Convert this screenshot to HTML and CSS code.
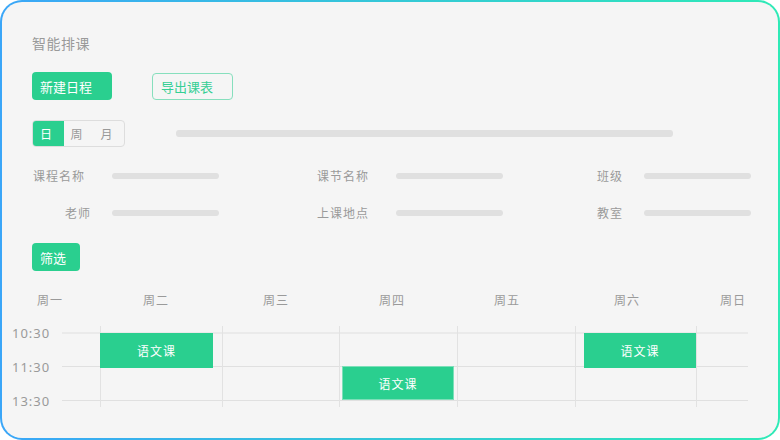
FILE: index.html
```html
<!DOCTYPE html>
<html lang="zh">
  <head>
    <meta charset="UTF-8" />
    <meta name="viewport" content="width=device-width, initial-scale=1.0" />
    <title>智能排课</title>
    <link rel="stylesheet" href="styles.css">
  </head>
  <body>
    <div class="card">
      <div class="title">智能排课</div>

      <div class="toolbar">
        <button class="btn btn-primary">新建日程</button>
        <button class="btn btn-outline">导出课表</button>
      </div>

      <div class="view-row">
        <div class="tabs">
          <span class="tab active">日</span>
          <span class="tab">周</span>
          <span class="tab">月</span>
        </div>
        <div class="bar bar-long"></div>
      </div>

      <div class="fields">
        <div class="field f1">
          <span class="label">课程名称</span>
          <div class="bar"></div>
        </div>
        <div class="field f2">
          <span class="label">课节名称</span>
          <div class="bar"></div>
        </div>
        <div class="field f3">
          <span class="label">班级</span>
          <div class="bar"></div>
        </div>
      </div>
      <div class="fields second">
        <div class="field f1">
          <span class="label indent">老师</span>
          <div class="bar"></div>
        </div>
        <div class="field f2">
          <span class="label">上课地点</span>
          <div class="bar"></div>
        </div>
        <div class="field f3">
          <span class="label">教室</span>
          <div class="bar"></div>
        </div>
      </div>

      <button class="btn btn-primary btn-filter">筛选</button>

      <div class="calendar">
        <div class="days">
          <span>周一</span>
          <span>周二</span>
          <span>周三</span>
          <span>周四</span>
          <span>周五</span>
          <span>周六</span>
          <span>周日</span>
        </div>

        <div class="cal-body">
          <div class="times">
            <span>10:30</span>
            <span>11:30</span>
            <span>13:30</span>
          </div>
          <div class="grid">
            <div class="hline l1"></div>
            <div class="hline l2"></div>
            <div class="hline l3"></div>
            <div class="vline c2"></div>
            <div class="vline c3"></div>
            <div class="vline c4"></div>
            <div class="vline c5"></div>
            <div class="vline c6"></div>
            <div class="vline c7"></div>
            <div class="event e1">语文课</div>
            <div class="event e2">语文课</div>
            <div class="event e3">语文课</div>
          </div>
        </div>
      </div>
    </div>
  </body>
</html>
```

FILE: styles.css
```css
* {
  box-sizing: border-box;
}

body {
  margin: 0;
  background: #ffffff;
  font-family: "Noto Sans", "Noto Sans CJK SC", sans-serif;
}

.card {
  width: 780px;
  height: 440px;
  border: 2px solid transparent;
  border-radius: 22px;
  background: linear-gradient(#f5f5f5, #f5f5f5) padding-box,
    linear-gradient(to right, #3aa6f8, #2eeab6) border-box;
  padding: 32px 0 0 30px;
  overflow: hidden;
}

.title {
  font-size: 14px;
  line-height: 20px;
  color: #9a9a9a;
  letter-spacing: 0.5px;
}

.toolbar {
  display: flex;
  gap: 40px;
  margin-top: 18px;
  height: 28px;
}

.btn {
  font-family: "Noto Sans CJK SC", sans-serif;
  font-size: 13px;
  height: 28px;
  border-radius: 4px;
  border: none;
  padding: 0 8px;
  text-align: left;
  cursor: pointer;
}

.btn-primary {
  background: #2acf8f;
  color: #ffffff;
  width: 80px;
}

.btn-outline {
  background: transparent;
  border: 1px solid #86dfbd;
  color: #35cf94;
  width: 81px;
  height: 27px;
  margin-top: 1px;
}

.view-row {
  display: flex;
  align-items: center;
  margin-top: 20px;
}

.tabs {
  display: flex;
  width: 93px;
  height: 27px;
  border: 1px solid #dddddd;
  border-radius: 4px;
  overflow: hidden;
}

.tab {
  width: 30px;
  padding-right: 5px;
  font-size: 12px;
  line-height: 25px;
  color: #999999;
  text-align: center;
  font-family: "Noto Sans CJK SC", sans-serif;
}

.tab.active {
  width: 32px;
  margin: -1px 0 -1px -1px;
  line-height: 27px;
  background: #2acf8f;
  color: #ffffff;
  padding-right: 4px;
}

.bar {
  height: 6px;
  width: 107px;
  border-radius: 3px;
  background: #e0e0e0;
}

.bar-long {
  width: 497px;
  height: 7px;
  margin-left: 51px;
}

.fields {
  display: flex;
  margin-top: 19px;
  height: 20px;
}

.fields.second {
  margin-top: 17px;
}

.field {
  display: flex;
  align-items: center;
}

.label {
  font-size: 12px;
  line-height: 20px;
  letter-spacing: 1px;
  color: #9a9a9a;
  font-family: "Noto Sans CJK SC", sans-serif;
}

.f1 .label {
  width: 80px;
  padding-left: 1px;
}

.f1 .label.indent {
  padding-left: 33px;
}

.f2 {
  margin-left: 98px;
}

.f2 .label {
  width: 79px;
}

.f3 {
  margin-left: 59px;
}

.f3 .label {
  width: 61px;
  text-align: right;
  margin-right: 21px;
}

.btn-filter {
  display: block;
  width: 48px;
  margin-top: 20px;
}

.calendar {
  margin-left: -20px;
  margin-top: 19px;
}

.days {
  display: grid;
  grid-template-columns: 106px 120px 116px 115px 120px 106px auto;
  padding-left: 25px;
  font-size: 12px;
  line-height: 20px;
  letter-spacing: 1px;
  color: #9a9a9a;
  font-family: "Noto Sans CJK SC", sans-serif;
}

.cal-body {
  display: flex;
  margin-top: 16px;
}

.times {
  width: 50px;
  display: flex;
  flex-direction: column;
  gap: 20px;
  font-size: 13px;
  line-height: 14px;
  letter-spacing: 1px;
  color: #9a9a9a;
}

.grid {
  display: grid;
  grid-template-columns: 38px 122px 117px 118px 118px 121px 52px;
  grid-template-rows: 6px 34px 34px 7px;
  width: 686px;
}

.hline {
  grid-column: 1 / -1;
  border-top: 1px solid #e0e0e0;
}

.hline.l1 {
  grid-row: 2;
  border-top: 2px solid #eaeaea;
}

.hline.l2 {
  grid-row: 3;
}

.hline.l3 {
  grid-row: 4;
}

.vline {
  grid-row: 1 / -1;
  border-left: 1px solid #e2e2e2;
}

.c2 { grid-column: 2; }
.c3 { grid-column: 3; }
.c4 { grid-column: 4; }
.c5 { grid-column: 5; }
.c6 { grid-column: 6; }
.c7 { grid-column: 7; }

.event {
  z-index: 1;
  background: #2acf8f;
  color: #ffffff;
  font-size: 12px;
  font-family: "Noto Sans CJK SC", sans-serif;
  letter-spacing: 1px;
  width: 113px;
  height: 35px;
  display: flex;
  align-items: center;
  justify-content: center;
}

.e1 {
  grid-column: 2;
  grid-row: 2;
  margin-top: 1px;
}

.e2 {
  grid-column: 4;
  grid-row: 3;
  margin-left: 3px;
  width: 112px;
  height: 34px;
  border: 1px solid #7ddfb9;
}

.e3 {
  grid-column: 6;
  grid-row: 2;
  margin-top: 1px;
  margin-left: 9px;
  width: 112px;
}
```
